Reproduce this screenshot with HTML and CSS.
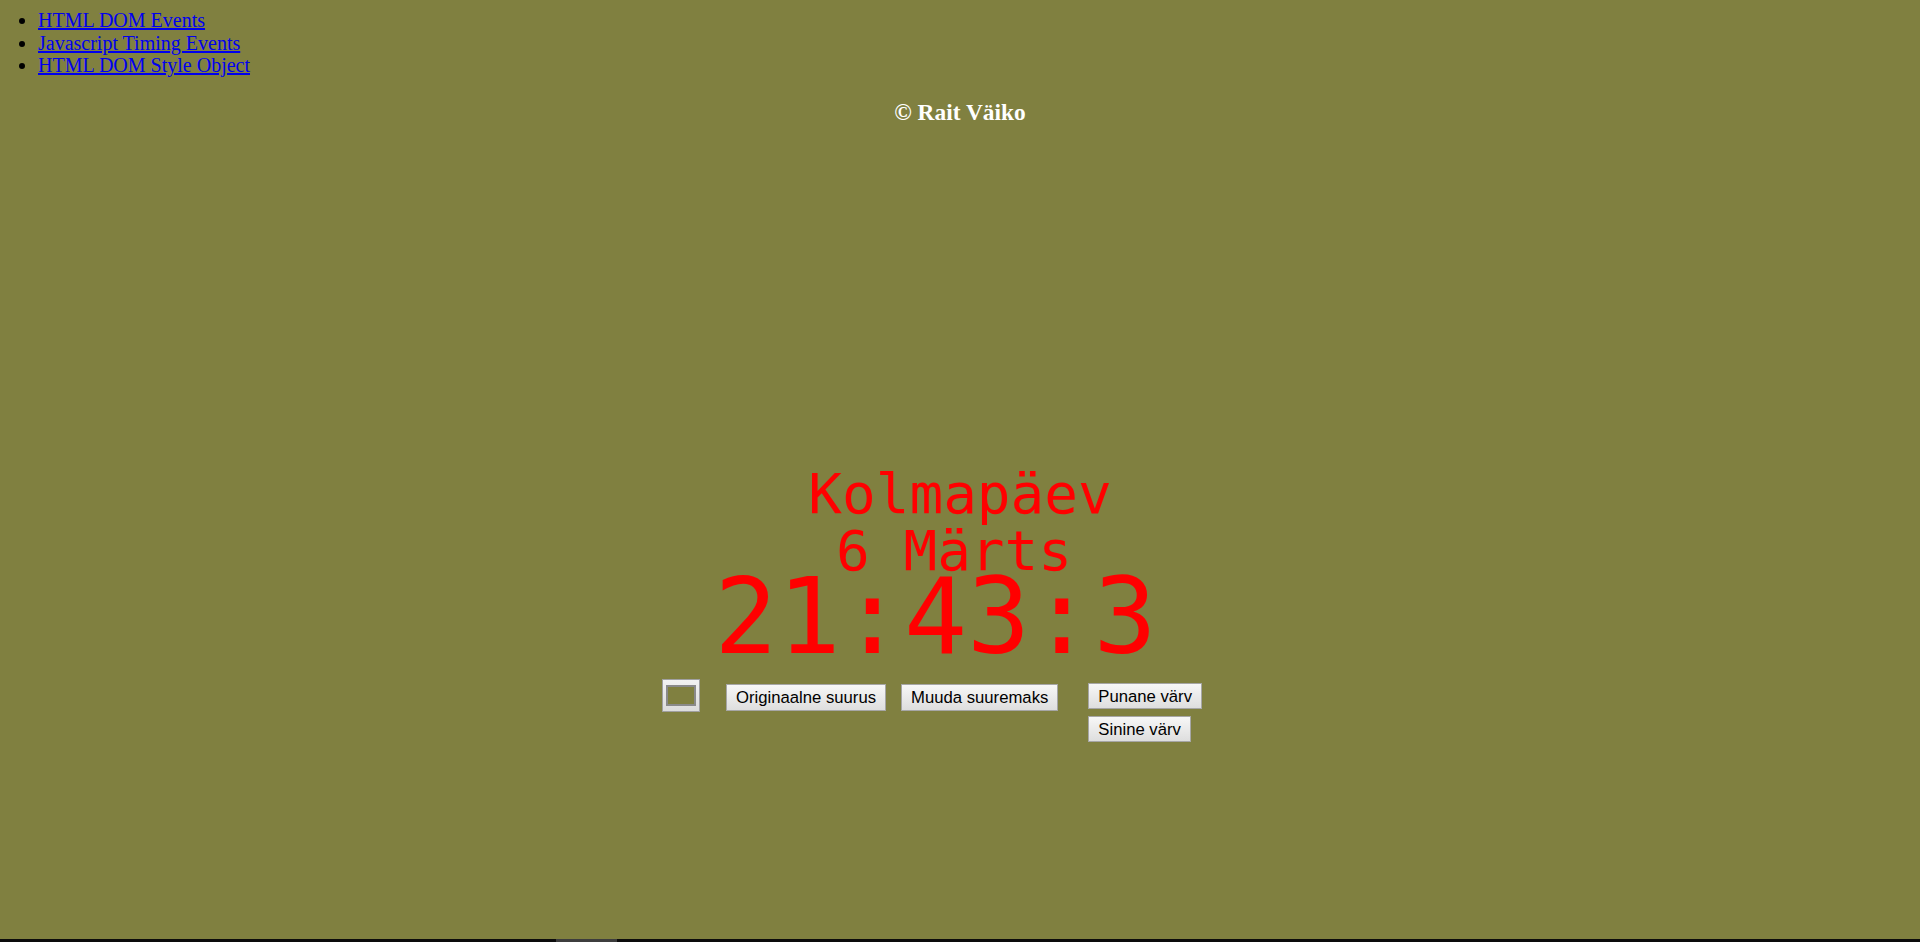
FILE: index.html
```html
<!DOCTYPE html>
<html lang="et">
<head>
<meta charset="utf-8">
<title>Kell</title>
<link rel="stylesheet" href="styles.css">
</head>
<body>
<ul class="links">
  <li><a href="#">HTML DOM Events</a></li>
  <li><a href="#">Javascript Timing Events</a></li>
  <li><a href="#">HTML DOM Style Object</a></li>
</ul>
<h3 class="author">© Rait Väiko</h3>
<div class="clock">
  <div class="day">Kolmapäev</div>
  <div class="date">6 Märts</div>
  <div class="time">21:43:3</div>
</div>
<div class="controls">
  <span class="swatch"><span class="swatch-inner"></span></span>
  <button class="btn btn-first">Originaalne suurus</button>
  <button class="btn btn-second">Muuda suuremaks</button>
  <div class="color-col">
    <button class="btn">Punane värv</button>
    <button class="btn">Sinine värv</button>
  </div>
</div>
<div class="bottom-bar"><span class="bottom-thumb"></span></div>
</body>
</html>
```

FILE: styles.css
```css
html, body {
  margin: 0;
  padding: 0;
}
body {
  background: #808040;
  font-family: "Liberation Serif", "Times New Roman", serif;
  font-size: 20px;
  padding-top: 9px;
  min-height: 933px;
}
.links {
  margin: 0;
  padding-left: 38px;
  line-height: 22.5px;
}
.links a {
  color: #0000ee;
  text-decoration: underline;
}
.author {
  margin: 22.5px 0 0;
  text-align: center;
  color: #ffffff;
  font-size: 23.4px;
  font-weight: bold;
  line-height: 27px;
}
.clock {
  margin-top: 339px;
  text-align: center;
  color: #ff0000;
  font-family: "DejaVu Sans Mono", "Liberation Mono", monospace;
}
.day, .date {
  font-size: 56px;
  line-height: 57px;
}
.date {
  padding-right: 12px;
}
.time {
  font-size: 105px;
  line-height: 77px;
  padding-right: 49px;
}
.controls {
  display: flex;
  justify-content: center;
  align-items: flex-start;
  padding-right: 56px;
  margin-top: 23px;
  font-family: "Liberation Sans", Arial, sans-serif;
}
.swatch {
  box-sizing: border-box;
  width: 38px;
  height: 33px;
  border: 1px solid #a0a0a0;
  background: linear-gradient(#f2f2f2, #dcdcdc);
  display: flex;
  align-items: center;
  justify-content: center;
}
.swatch-inner {
  box-sizing: border-box;
  width: 30px;
  height: 21px;
  border: 2px solid #8a8a8a;
  background: #808040;
}
.btn {
  box-sizing: border-box;
  height: 27px;
  margin: 5px 0 0;
  padding: 0 9px;
  border: 1px solid #a6a6a6;
  border-radius: 0;
  background: linear-gradient(#f7f7f7, #dedede);
  color: #000;
  font-family: "Liberation Sans", Arial, sans-serif;
  font-size: 16.7px;
  line-height: 25px;
}
.btn-first {
  margin-left: 26px;
}
.btn-second {
  margin-left: 15px;
}
.color-col {
  margin-left: 30px;
  display: flex;
  flex-direction: column;
  align-items: flex-start;
  gap: 7px;
}
.color-col .btn {
  margin-top: 4px;
  height: 26px;
}
.color-col .btn + .btn {
  margin-top: 0;
}
.bottom-bar {
  position: fixed;
  left: 0;
  right: 0;
  bottom: 0;
  height: 3px;
  background: #0c0c0c;
}
.bottom-thumb {
  position: absolute;
  left: 556px;
  width: 61px;
  top: 0;
  bottom: 0;
  background: #3d3d3d;
}
```
